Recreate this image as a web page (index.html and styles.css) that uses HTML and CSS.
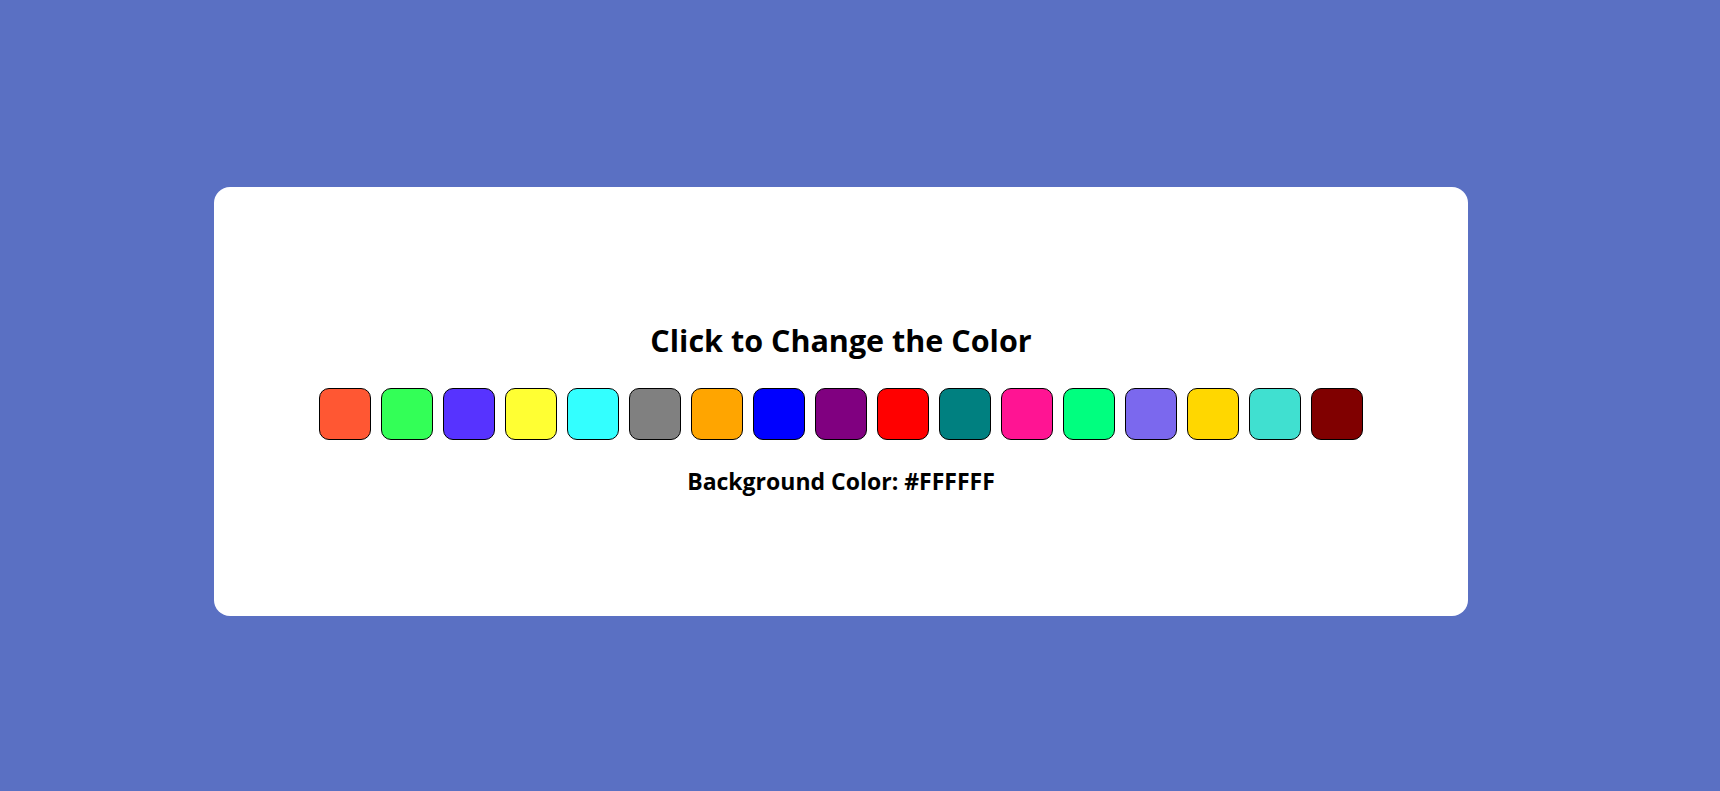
FILE: index.html
```html
<!DOCTYPE html>
<html>
<head>
<meta charset="utf-8">
<link rel="stylesheet" href="styles.css">
</head>
<body>
<div class="page">
  <div class="card">
    <h1 class="title">Click to Change the Color</h1>
    <div class="swatches">
      <button class="swatch" style="background:#FF5733"></button>
      <button class="swatch" style="background:#33FF57"></button>
      <button class="swatch" style="background:#5733FF"></button>
      <button class="swatch" style="background:#FFFF33"></button>
      <button class="swatch" style="background:#33FFFF"></button>
      <button class="swatch" style="background:#808080"></button>
      <button class="swatch" style="background:#FFA500"></button>
      <button class="swatch" style="background:#0000FF"></button>
      <button class="swatch" style="background:#800080"></button>
      <button class="swatch" style="background:#FF0000"></button>
      <button class="swatch" style="background:#008080"></button>
      <button class="swatch" style="background:#FF1493"></button>
      <button class="swatch" style="background:#00FF7F"></button>
      <button class="swatch" style="background:#7B68EE"></button>
      <button class="swatch" style="background:#FFD700"></button>
      <button class="swatch" style="background:#40E0D0"></button>
      <button class="swatch" style="background:#800000"></button>
    </div>
    <p class="label">Background Color: #FFFFFF</p>
  </div>
</div>
</body>
</html>
```
FILE: styles.css
```css
html, body {
  margin: 0;
  padding: 0;
}
body {
  background: #5a70c3;
  font-family: "Open Sans", "Noto Sans", sans-serif;
  color: #000;
}
.page {
  box-sizing: border-box;
  height: 100vh;
  padding: 187px 252px 175px 214px;
  display: flex;
}
.card {
  flex: 1;
  background: #fff;
  border-radius: 16px;
  padding-top: 133px;
  display: flex;
  flex-direction: column;
  align-items: center;
  justify-content: flex-start;
}
.title {
  margin: 0;
  font-size: 30.5px;
  font-weight: 700;
  line-height: 40px;
}
.swatches {
  display: flex;
  gap: 10px;
  margin-top: 28px;
}
.swatch {
  width: 52px;
  height: 52px;
  box-sizing: border-box;
  border: 1px solid #000;
  border-radius: 10px;
  padding: 0;
  cursor: pointer;
}
.label {
  margin: 26px 0 0;
  font-size: 23px;
  font-weight: 700;
  line-height: 30px;
}
```
